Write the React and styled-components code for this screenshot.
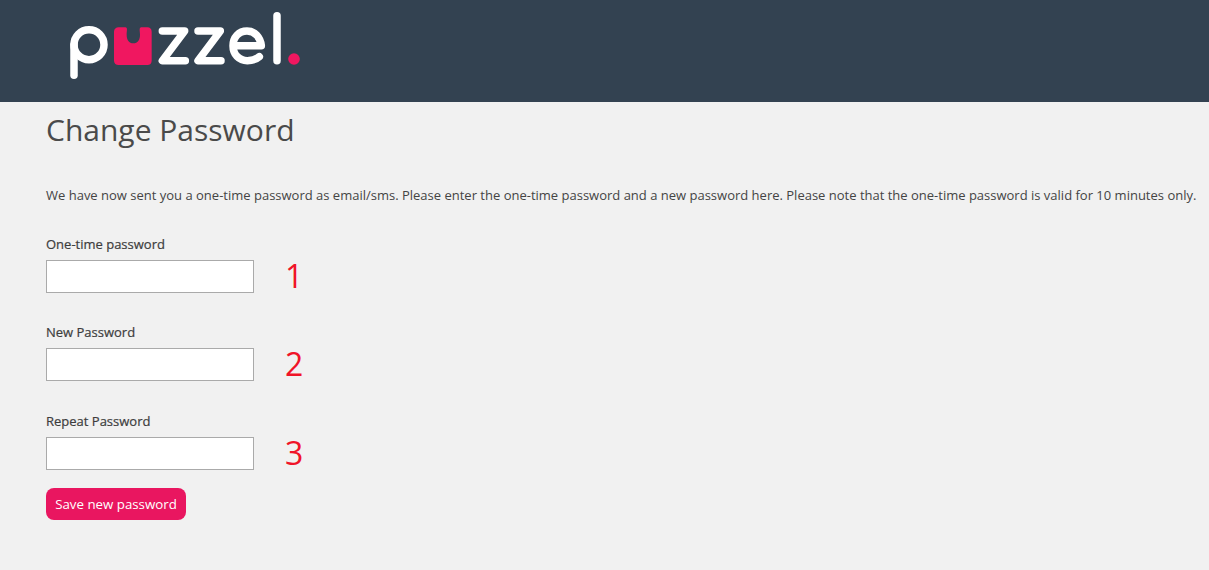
import React from "react";
import styled, { createGlobalStyle } from "styled-components";

const GlobalStyle = createGlobalStyle`
  html, body {
    margin: 0;
    padding: 0;
    background: #f1f1f1;
    font-family: "Open Sans", "Liberation Sans", sans-serif;
  }
`;

const Header = styled.header`
  height: 102px;
  background: #334251;
  display: flex;
`;

const Logo = styled.svg`
  width: 270px;
  height: 105px;
  margin-left: 50px;
  display: block;
`;

const Main = styled.main`
  padding: 0 0 0 46px;
  color: #444;
`;

const Title = styled.h1`
  margin: 0;
  padding-top: 8px;
  font-size: 30px;
  line-height: 40px;
  font-weight: 400;
  color: #4a4a4a;
`;

const Intro = styled.p`
  margin: 36px 0 0;
  font-size: 13px;
  line-height: 18px;
  white-space: nowrap;
  color: #444;
`;

const Field = styled.div`
  margin-top: 30.5px;
`;

const Label = styled.label`
  display: block;
  font-size: 13px;
  line-height: 19px;
  font-weight: 500;
  color: #3d3d3d;
  -webkit-text-stroke: 0.2px #3d3d3d;
`;

const InputRow = styled.div`
  display: flex;
  align-items: center;
  gap: 31px;
  margin-top: 6px;
`;

const TextInput = styled.input`
  box-sizing: border-box;
  width: 208px;
  height: 33px;
  padding: 0 6px;
  background: #fff;
  border: 1px solid #aaa;
  border-radius: 0;
  outline: none;
`;

const Marker = styled.span`
  font-size: 32px;
  line-height: 33px;
  margin-top: -2px;
  color: #f01428;
`;

const SaveButton = styled.button`
  display: block;
  width: 140px;
  height: 32px;
  margin-top: 18px;
  padding: 0;
  border: none;
  border-radius: 8px;
  background: #e91660;
  color: #fff;
  font-family: inherit;
  font-size: 13.3px;
`;

const PuzzelLogo = () => (
  <Logo viewBox="0 0 810 315" role="img" aria-label="puzzel">
    <g fill="none" stroke="#fff" strokeWidth="22.5" strokeLinecap="round" strokeLinejoin="round">
      <circle cx="117" cy="134" r="45" />
      <path d="M72 134V226" />
      <path d="M337 93H404L337 182H406" />
      <path d="M444 93H511L444 182H513" />
      <path d="M549 137H634C631 111 614 93 591 93C566 93 549 112 549 137C549 163 567 182 592 182C608 182 619 178 628 170" />
      <path d="M681 47V182" />
    </g>
    <path
      fill="#f01760"
      d="M206 82H226C234 82 230 94 230 104C230 120 237 130 250 130C263 130 270 120 270 104C270 94 266 82 274 82H292C300 82 305 87 305 95V182C305 190 300 195 292 195H206C198 195 192 190 192 182V95C192 87 198 82 206 82Z"
    />
    <circle cx="732" cy="177" r="17.5" fill="#f01760" />
  </Logo>
);

const fields = [
  { label: "One-time password", marker: 1 },
  { label: "New Password", marker: 2 },
  { label: "Repeat Password", marker: 3 },
];

export default function App() {
  return (
    <>
      <GlobalStyle />
      <Header>
        <PuzzelLogo />
      </Header>
      <Main>
        <Title>Change Password</Title>
        <Intro>
          We have now sent you a one-time password as email/sms. Please enter the one-time password and a new password here. Please note that the one-time password is valid for 10 minutes only.
        </Intro>
        {fields.map((field) => (
          <Field key={field.marker}>
            <Label>{field.label}</Label>
            <InputRow>
              <TextInput type="password" />
              <Marker>{field.marker}</Marker>
            </InputRow>
          </Field>
        ))}
        <SaveButton>Save new password</SaveButton>
      </Main>
    </>
  );
}
